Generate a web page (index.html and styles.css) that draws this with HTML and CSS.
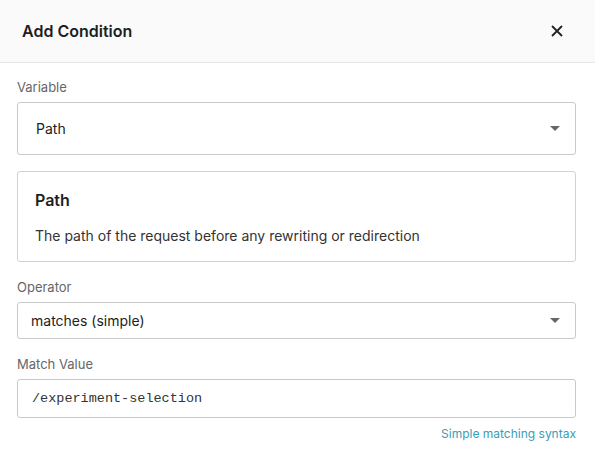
FILE: index.html
```html
<!DOCTYPE html>
<html>
<head>
<meta charset="utf-8">
<link rel="stylesheet" href="styles.css">
</head>
<body>
<div class="dialog">
  <div class="header">
    <h1 class="title">Add Condition</h1>
    <button class="close" aria-label="Close">
      <svg width="14" height="14" viewBox="0 0 14 14"><path d="M2 2L12 12M12 2L2 12" stroke="#222" stroke-width="1.8" fill="none"/></svg>
    </button>
  </div>
  <div class="body">
    <div class="label">Variable</div>
    <div class="select select-lg">
      <span class="select-text">Path</span>
      <span class="caret"></span>
    </div>
    <div class="info">
      <div class="info-title">Path</div>
      <div class="info-desc">The path of the request before any rewriting or redirection</div>
    </div>
    <div class="label">Operator</div>
    <div class="select select-sm">
      <span class="select-text">matches (simple)</span>
      <span class="caret"></span>
    </div>
    <div class="label">Match Value</div>
    <div class="input">/experiment-selection</div>
    <div class="help"><a class="link">Simple matching syntax</a></div>
  </div>
</div>
</body>
</html>
```
FILE: styles.css
```css
* { box-sizing: border-box; }
html, body { margin: 0; padding: 0; background: #fff; }
body { font-family: Inter, "Noto Sans", sans-serif; color: #222; }
.dialog { width: 595px; height: 450px; overflow: hidden; }
.header {
  height: 63px;
  background: #fafafa;
  border-bottom: 1px solid #e6e6e6;
  display: flex;
  align-items: center;
  justify-content: space-between;
  padding: 0 31px 0 22px;
}
.title { margin: 0; font-size: 16px; font-weight: 600; color: #1e1e1e; }
.close { border: 0; background: none; padding: 0; display: flex; cursor: pointer; }
.body { padding: 16px 19px 0 17px; }
.label { font-size: 13px; line-height: 16px; color: #666; margin-bottom: 7px; }
.select {
  border: 1px solid #c9c9c9;
  border-radius: 3px;
  display: flex;
  align-items: center;
  justify-content: space-between;
  margin-bottom: 16px;
}
.select-lg { height: 53px; padding: 0 15px 0 18px; }
.select-sm { height: 37px; padding: 0 15px 0 13px; margin-bottom: 17px; }
.select-text { font-size: 14px; color: #222; }
.caret {
  width: 0; height: 0;
  border-left: 5px solid transparent;
  border-right: 5px solid transparent;
  border-top: 5px solid #666;
}
.info {
  border: 1px solid #b3dbf5;
  border-radius: 3px;
  height: 91px;
  padding: 18px 17px 0 17px;
  margin-bottom: 17px;
}
.info-title { font-size: 16px; font-weight: 600; line-height: 21px; color: #1e1e1e; margin-bottom: 16px; }
.info-desc { font-size: 14px; line-height: 18px; color: #333; }
.input {
  height: 39px;
  border: 1px solid #c9c9c9;
  border-radius: 3px;
  padding: 0 14px;
  display: flex;
  align-items: center;
  font-family: "Liberation Mono", "Courier New", monospace;
  font-size: 13.5px;
  color: #333;
}
.help { text-align: right; margin-top: 8px; font-size: 12px; line-height: 16px; }
.link { color: #3a9db5; text-decoration: none; }
```
